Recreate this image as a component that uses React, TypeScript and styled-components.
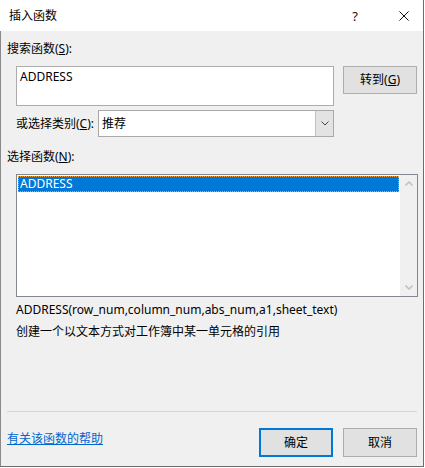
import React from "react";
import styled, { createGlobalStyle } from "styled-components";

const Global = createGlobalStyle`
  html, body { margin: 0; padding: 0; background: #ffffff; }
  body {
    font-family: "Noto Sans", "Noto Sans CJK SC", sans-serif;
    font-size: 12px;
    color: #000;
  }
`;

const Window = styled.div`
  width: 424px;
  height: 467px;
  box-sizing: border-box;
  border-right: 1px solid #6d6d6d;
  border-bottom: 1px solid #6d6d6d;
  display: flex;
  flex-direction: column;
  background: #f0f0f0;
`;

const TitleBar = styled.div`
  height: 31px;
  flex-shrink: 0;
  background: #fff;
  display: flex;
  align-items: center;
  padding-left: 9px;
`;

const Title = styled.div`
  flex: 1;
  font-size: 12px;
  line-height: 16px;
`;

const TitleButton = styled.div<{ $w: number }>`
  width: ${(p) => p.$w}px;
  height: 31px;
  display: flex;
  align-items: center;
  justify-content: center;
  font-size: 13px;
  color: #111;
`;

const Body = styled.div`
  flex: 1;
  display: flex;
  flex-direction: column;
  border-left: 1px solid #8a8a8a;
  padding: 10px 6px 9px 6px;
  min-height: 0;
`;

const Label = styled.div<{ $mt?: number; $indent?: number }>`
  line-height: 16px;
  margin-top: ${(p) => p.$mt ?? 0}px;
  padding-left: ${(p) => p.$indent ?? 0}px;
  white-space: nowrap;
`;

const Row = styled.div<{ $mt: number; $align?: string }>`
  display: flex;
  align-items: ${(p) => p.$align ?? "flex-start"};
  margin-top: ${(p) => p.$mt}px;
  padding-left: 9px;
`;

const SearchBox = styled.div`
  width: 318px;
  height: 40px;
  box-sizing: border-box;
  border: 1px solid #acacac;
  background: #fff;
  padding: 2px 3px;
  line-height: 16px;
`;

const Button = styled.div<{ $primary?: boolean; $h?: number }>`
  width: 74px;
  height: ${(p) => p.$h ?? 28}px;
  box-sizing: border-box;
  border: ${(p) => (p.$primary ? "2px solid #0078d7" : "1px solid #adadad")};
  background: #e1e1e1;
  display: flex;
  align-items: center;
  justify-content: center;
  line-height: 16px;
  flex-shrink: 0;
`;

const GoButton = styled(Button)`
  margin-left: 9px;
`;

const CatLabel = styled.div`
  width: 82px;
  line-height: 16px;
  white-space: nowrap;
`;

const Select = styled.div`
  width: 236px;
  height: 27px;
  box-sizing: border-box;
  border: 1px solid #a9a9a9;
  background: #fff;
  display: flex;
  align-items: stretch;
`;

const SelectValue = styled.div`
  flex: 1;
  padding-left: 3px;
  display: flex;
  align-items: center;
  line-height: 16px;
`;

const SelectArrow = styled.div`
  width: 17px;
  background: #e3e3e3;
  border-left: 1px solid #c2c2c2;
  display: flex;
  align-items: center;
  justify-content: center;
`;

const ListBox = styled.div`
  margin-left: 9px;
  margin-top: 9px;
  width: 402px;
  height: 123px;
  box-sizing: border-box;
  border: 1px solid #828790;
  background: #fff;
  display: flex;
`;

const Items = styled.div`
  flex: 1;
  padding: 1px;
`;

const Item = styled.div<{ $selected?: boolean }>`
  height: 16px;
  box-sizing: border-box;
  line-height: 14px;
  padding-left: 1px;
  background: ${(p) => (p.$selected ? "#0078d7" : "transparent")};
  color: ${(p) => (p.$selected ? "#fff" : "#000")};
  border: 1px dotted ${(p) => (p.$selected ? "#f0a040" : "transparent")};
`;

const ScrollBar = styled.div`
  width: 17px;
  background: #f0f0f0;
  display: flex;
  flex-direction: column;
  justify-content: space-between;
`;

const ScrollArrow = styled.div`
  height: 17px;
  display: flex;
  align-items: center;
  justify-content: center;
`;

const Desc = styled.div`
  margin-top: 2px;
  padding-left: 9px;
  line-height: 22px;
`;

const Separator = styled.div`
  margin-top: auto;
  height: 1px;
  background: #d5d5d5;
`;

const Footer = styled.div`
  display: flex;
  align-items: center;
  gap: 10px;
  padding-top: 16px;
`;

const HelpLink = styled.a`
  align-self: flex-start;
  margin-top: 3px;
  margin-right: auto;
  color: #0066cc;
  text-decoration: underline;
  line-height: 16px;
  cursor: pointer;
`;

const U = styled.span`
  text-decoration: underline;
`;

const Chevron = ({ up, color, w = 8 }: { up?: boolean; color: string; w?: number }) => (
  <svg width={w} height={5} viewBox="0 0 8 5">
    <path
      d={up ? "M0.5 4.5 L4 1 L7.5 4.5" : "M0.5 0.5 L4 4 L7.5 0.5"}
      fill="none"
      stroke={color}
      strokeWidth={up ? 1.6 : 1}
    />
  </svg>
);

export default function App() {
  return (
    <>
      <Global />
      <Window>
        <TitleBar>
          <Title>插入函数</Title>
          <TitleButton $w={48}>?</TitleButton>
          <TitleButton $w={6} />
          <TitleButton $w={38}>
            <svg width="10" height="10" viewBox="0 0 10 10">
              <path d="M0.5 0.5 L9.5 9.5 M9.5 0.5 L0.5 9.5" stroke="#111" strokeWidth="1" />
            </svg>
          </TitleButton>
        </TitleBar>
        <Body>
          <Label>
            搜索函数(<U>S</U>):
          </Label>
          <Row $mt={9}>
            <SearchBox>ADDRESS</SearchBox>
            <GoButton>
              转到(<U>G</U>)
            </GoButton>
          </Row>
          <Row $mt={4} $align="center">
            <CatLabel>
              或选择类别(<U>C</U>):
            </CatLabel>
            <Select>
              <SelectValue>推荐</SelectValue>
              <SelectArrow>
                <Chevron color="#444" />
              </SelectArrow>
            </Select>
          </Row>
          <Label $mt={12}>
            选择函数(<U>N</U>):
          </Label>
          <ListBox>
            <Items>
              <Item $selected>ADDRESS</Item>
            </Items>
            <ScrollBar>
              <ScrollArrow>
                <Chevron up color="#c3c3c3" />
              </ScrollArrow>
              <ScrollArrow>
                <svg width={8} height={5} viewBox="0 0 8 5">
                  <path d="M0.5 0.5 L4 4 L7.5 0.5" fill="none" stroke="#c3c3c3" strokeWidth={1.6} />
                </svg>
              </ScrollArrow>
            </ScrollBar>
          </ListBox>
          <Desc>
            ADDRESS(row_num,column_num,abs_num,a1,sheet_text)
            <br />
            创建一个以文本方式对工作簿中某一单元格的引用
          </Desc>
          <Separator />
          <Footer>
            <HelpLink>有关该函数的帮助</HelpLink>
            <Button $primary $h={29}>确定</Button>
            <Button $h={29}>取消</Button>
          </Footer>
        </Body>
      </Window>
    </>
  );
}
